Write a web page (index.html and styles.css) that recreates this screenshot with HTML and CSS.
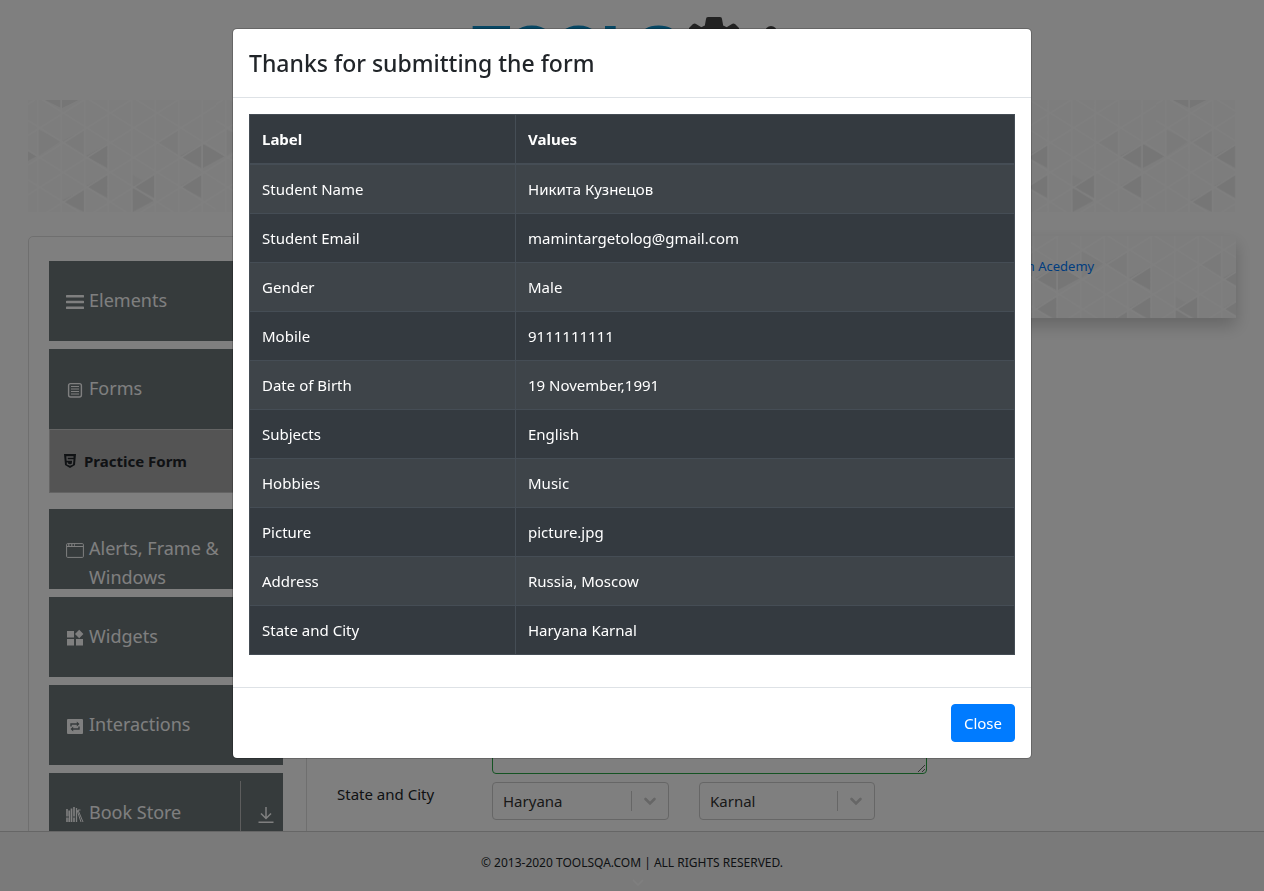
FILE: index.html
```html
<!DOCTYPE html>
<html lang="en">
<head>
<meta charset="utf-8">
<title>ToolsQA</title>
<link rel="stylesheet" href="styles.css">
</head>
<body>
<div class="page">
  <div class="viewport">
    <header class="site-header">
      <svg class="logo" width="320" height="60" viewBox="0 0 320 60" role="img" aria-label="TOOLS">
        <text class="logo-text" x="1" y="51">TOOLS</text>
        <g fill="#444">
          <circle cx="242" cy="34" r="27"/>
          <path d="M236 0h12q2 0 2 2l2 11h-20l2-11q0-2 2-2zM217 11l4-4q2-1 3 0l10 6-8 9-9-8zM267 11l-4-4q-2-1-3 0l-10 6 8 9 9-8z"/>
          <circle cx="299" cy="15" r="6"/>
        </g>
      </svg>
    </header>
    <svg class="banner" aria-hidden="true">
      <defs>
        <pattern id="triangles" width="564" height="356" patternUnits="userSpaceOnUse" patternTransform="scale(.3333)">
          <g fill="#f5f5f5">
            <path d="M31 88v80l68-45zM169 88v80l-68-45zM169 268v68l-68-34zM310 222v80l68-40zM450 90v78l-68-39z"/>
          </g>
          <g fill="#ececec">
            <path d="M51 0h100l-50 25zM169 268v68l-68-34zM174 168l65-36v72zM174 258l65-36v72zM314 258l65-36v72zM314 265v71l65-35zM456 258l65-36v72zM456 168l65-36v72zM524 132v72l66-36zM-40 132v72l66-36z"/>
          </g>
          <path fill="none" stroke="#fff" stroke-width="5" d="M29 0v356M99.500 0v356M170 0v356M240.500 0v356M311 0v356M381.500 0v356M452 0v356M522.500 0v356M0 -28L564 328M0 -117L564 239M0 -206L564 150M0 61L564 417M0 150L564 506M0 239L564 595M0 13L20 0M0 106L168 0M0 195L309 0M0 284L450 0M0 373L591 0M132 378L564 106M273 378L564 195M414 378L564 284"/>
        </pattern>
        <pattern id="triangles-ad" href="#triangles" patternTransform="translate(85 -14) scale(.3333)"/>
      </defs>
      <rect width="100%" height="100%" fill="#fafafa"/>
      <rect width="100%" height="100%" fill="url(#triangles)"/>
    </svg>
    <div class="columns">
      <nav class="panel" aria-label="Sections">
        <button class="item"><svg class="icon" viewBox="0 0 18 18"><path d="M1 3.300h16M1 9h16M1 14.700h16" stroke="currentColor" stroke-width="2.600" stroke-linecap="round"/></svg><span>Elements</span></button>
        <div class="group">
          <button class="item"><svg class="icon" viewBox="0 0 18 18"><rect x="2.600" y="2.600" width="12.800" height="13.400" rx="2" fill="none" stroke="currentColor" stroke-width="1.400"/><path d="M5 5.500h8M5 8h8M5 10.500h8M5 13h8" stroke="currentColor"/></svg><span>Forms</span></button>
          <a class="subitem" href="#practice-form"><svg width="14" height="14" viewBox="0 0 14 14"><path d="M1 0h12l-1 11-5 3-5-3z" fill="currentColor"/><path d="M10.500 3H4l.2 3h5.600l-.4 4L7 11l-2.500-1-.1-1.500" fill="none" stroke="#a8a8a8" stroke-width="1.300"/></svg><span>Practice Form</span></a>
        </div>
        <button class="item"><svg class="icon" viewBox="0 0 18 18"><rect x=".6" y="2.600" width="16.800" height="13.800" rx="1" fill="none" stroke="currentColor"/><path d="M1 5.500h16" stroke="currentColor"/><path d="M2 4h1.500M5 4h1.500M8 4h1" stroke="currentColor" stroke-width="1.500"/></svg><span>Alerts, Frame &amp; Windows</span></button>
        <button class="item"><svg class="icon" viewBox="0 0 18 18" fill="currentColor"><path d="M1 2h7v6.500H1zM1 10h7v6.500H1zM10 10h7v6.500h-7zM13.200.800l4.200 4.200-4.200 4.200L9 5z"/></svg><span>Widgets</span></button>
        <button class="item"><svg class="icon" viewBox="0 0 18 18"><rect x="1" y="2" width="16" height="15" rx="1" fill="currentColor"/><path d="M5 9.500V7h6.500M13 9.500V12H6.500" fill="none" stroke="#6c7679" stroke-width="1.400"/><path d="M10.800 4.500v5L13.500 7zM7.200 9.500v5L4.500 12z" fill="#6c7679"/></svg><span>Interactions</span></button>
        <button class="item item-store"><svg class="icon" viewBox="0 0 18 18" fill="none" stroke="currentColor"><path d="M1 4v13M8 2v15" stroke-width="1.600"/><path d="M3.200 5.500v11.500M5.500 3.500v13.500" stroke-width="1.700"/><path d="M0 12h3M7 12h3" stroke="#6c7679"/><path d="M10.500 3v14" stroke-width="1.300"/><path d="M12 5l5 12M11 5l4 12M12 5l2.500 0"/></svg><span class="item-name">Book Store</span><span class="download"><svg width="18" height="18" viewBox="0 0 18 18" fill="none" stroke="currentColor" stroke-width="1.500"><path d="M9 1v11M4 7.500l5 5 5-5M1.500 16.200h15"/></svg></span></button>
      </nav>
      <main class="form" id="practice-form">
        <div class="row">
          <span></span>
          <textarea class="address" aria-label="Current Address"></textarea>
        </div>
        <div class="row">
          <label class="row-label" for="state">State and City</label>
          <div class="pickers">
            <div class="picker"><select id="state"><option>Haryana</option></select><svg class="chevron" viewBox="0 0 20 20"><path d="M5.500 8l4.500 4.500L14.500 8" fill="none" stroke="#ccc" stroke-width="2.600" stroke-linecap="round"/></svg></div>
            <div class="picker"><select aria-label="City"><option>Karnal</option></select><svg class="chevron" viewBox="0 0 20 20"><path d="M5.500 8l4.500 4.500L14.500 8" fill="none" stroke="#ccc" stroke-width="2.600" stroke-linecap="round"/></svg></div>
          </div>
        </div>
      </main>
      <aside class="ad">
        <svg class="ad-art" aria-hidden="true"><rect width="100%" height="100%" fill="#fafafa"/><rect width="100%" height="100%" fill="url(#triangles-ad)"/></svg>
        <a class="ad-link" href="#academy">Join Acedemy</a>
      </aside>
    </div>
  </div>
  <footer class="site-footer">
    <span>© 2013-2020 TOOLSQA.COM | ALL RIGHTS RESERVED.</span>
    <svg class="more" width="12" height="8" viewBox="0 0 12 8" aria-hidden="true"><path d="M1 1l5 5 5-5" fill="none" stroke="#fff" stroke-width="1.500"/></svg>
  </footer>
</div>

<div class="backdrop">
  <section class="modal" role="dialog" aria-modal="true" aria-labelledby="modal-title">
    <header class="modal-header"><h1 class="modal-title" id="modal-title">Thanks for submitting the form</h1></header>
    <div class="modal-body">
      <table class="results">
        <thead><tr><th class="col-label">Label</th><th>Values</th></tr></thead>
        <tbody>
          <tr><td>Student Name</td><td>Никита Кузнецов</td></tr>
          <tr><td>Student Email</td><td>mamintargetolog@gmail.com</td></tr>
          <tr><td>Gender</td><td>Male</td></tr>
          <tr><td>Mobile</td><td>9111111111</td></tr>
          <tr><td>Date of Birth</td><td>19 November,1991</td></tr>
          <tr><td>Subjects</td><td>English</td></tr>
          <tr><td>Hobbies</td><td>Music</td></tr>
          <tr><td>Picture</td><td>picture.jpg</td></tr>
          <tr><td>Address</td><td>Russia, Moscow</td></tr>
          <tr><td>State and City</td><td>Haryana Karnal</td></tr>
        </tbody>
      </table>
    </div>
    <footer class="modal-footer"><button class="close">Close</button></footer>
  </section>
</div>
</body>
</html>
```

FILE: styles.css
```css
*, *::before, *::after { box-sizing: border-box; }

body {
  margin: 0;
  font: 15px/24px "Segoe UI", "Noto Sans", "Open Sans", sans-serif;
  color: #212529;
  background: #fff;
}

button, select, textarea { font: inherit; }

a { text-decoration: none; }

.page { display: flex; flex-direction: column; height: 100vh; }

.viewport {
  flex: 1;
  min-height: 0;
  display: flex;
  flex-direction: column;
  padding: 0 28px;
  overflow: hidden;
}

/* Header and banner */
.site-header {
  flex: none;
  display: flex;
  justify-content: center;
  height: 100px;
  padding-top: 17px;
}

.logo-text {
  font: bold 60px "Liberation Sans", Arial, sans-serif;
  fill: #0e8fc8;
  stroke: #0e8fc8;
  stroke-width: 2px;
}

.banner { flex: none; width: 100%; height: 112px; }

.columns {
  flex: 1;
  min-height: 0;
  display: flex;
  gap: 15px;
  margin-top: 24px;
}

/* Side menu */
.panel {
  flex: none;
  align-self: flex-start;
  display: flex;
  flex-direction: column;
  gap: 8px;
  width: 279px;
  padding: 24px 23px 24px 20px;
  border: 1px solid #dfdfdf;
  border-radius: 5px;
}

.group { margin-bottom: 8px; }

.item {
  display: flex;
  align-items: flex-start;
  gap: 5px;
  width: 100%;
  height: 80px;
  padding: 25px 8px 0 17px;
  overflow: hidden;
  border: 0;
  background: #6c7679;
  color: #fff;
  font-size: 18px;
  line-height: 29px;
  text-align: left;
}

.icon { flex: none; width: 18px; height: 18px; margin-top: 7px; }

.item-store { padding-right: 0; }
.item-name { flex: 1; }

.download {
  display: flex;
  justify-content: center;
  width: 43px;
  height: 64px;
  margin-top: -17px;
  padding: 25px 0 0 7px;
  border-left: 1px solid #bbb;
}

.subitem {
  display: flex;
  align-items: center;
  gap: 7px;
  height: 64px;
  padding-left: 13px;
  border: 1px solid #c8c8c8;
  background: #a8a8a8;
  color: #212529;
  font-weight: bold;
}

/* Form */
.form {
  flex: none;
  width: 606px;
  display: flex;
  flex-direction: column;
  justify-content: flex-end;
  gap: 8px;
  padding: 0 0 11px 15px;
}

.row { display: grid; grid-template-columns: 155px 435px; }
.row-label { line-height: 24px; }

.address {
  height: 96px;
  border: 1px solid #28a745;
  border-radius: 4px;
  background: #fff;
}

.pickers { display: grid; grid-template-columns: 177px 176px; gap: 30px; }
.picker { display: grid; }

.picker > * { grid-area: 1 / 1; }

.picker select {
  appearance: none;
  height: 38px;
  padding: 0 10px;
  border: 1px solid #ccc;
  border-radius: 4px;
  background: #fff;
  color: #333;
}

.chevron {
  align-self: center;
  justify-self: end;
  width: 37px;
  height: 20px;
  margin-right: 1px;
  border-left: 1px solid #ccc;
  pointer-events: none;
}

/* Advert */
.ad {
  flex: 1;
  align-self: flex-start;
  display: grid;
  height: 82px;
  margin-left: 43px;
  box-shadow: 0 8px 16px rgba(0, 0, 0, .2);
}

.ad > * { grid-area: 1 / 1; }
.ad-art { width: 100%; height: 100%; }

.ad-link {
  align-self: start;
  justify-self: start;
  padding: 18px 0 0 26px;
  color: #007bff;
  font-size: 13px;
}

/* Page footer */
.site-footer {
  position: relative;
  flex: none;
  display: flex;
  align-items: center;
  justify-content: center;
  height: 60px;
  padding-top: 2px;
  border-top: 1px solid #ccc;
  background: #f5f5f5;
  font-size: 12px;
}

.more { position: absolute; bottom: 4px; left: 50%; }

/* Dialog */
.backdrop {
  position: fixed;
  inset: 0;
  padding: 28px 16px;
  background: rgba(0, 0, 0, .5);
}

.modal {
  max-width: 800px;
  margin: 0 auto;
  border: 1px solid rgba(0, 0, 0, .2);
  border-radius: 5px;
  background: #fff;
  background-clip: padding-box;
}

.modal-header { padding: 16px; border-bottom: 1px solid #dee2e6; }

.modal-title {
  margin: 0;
  font-size: 23px;
  font-weight: 500;
  line-height: 36px;
}

.modal-body { padding: 16px 16px 32px; }

.results {
  width: 100%;
  border-collapse: collapse;
  background: #343a40;
  color: #fff;
}

.results th, .results td {
  padding: 12px;
  border: 1px solid #454d55;
  text-align: left;
}

.results thead th { border-bottom-width: 2px; }
.results tbody tr:nth-child(odd) { background: rgba(255, 255, 255, .05); }
.col-label { width: 266px; }

.modal-footer {
  display: flex;
  justify-content: flex-end;
  padding: 16px;
  border-top: 1px solid #dee2e6;
}

.close {
  height: 38px;
  padding: 0 12px;
  border: 1px solid #007bff;
  border-radius: 4px;
  background: #007bff;
  color: #fff;
}
```
